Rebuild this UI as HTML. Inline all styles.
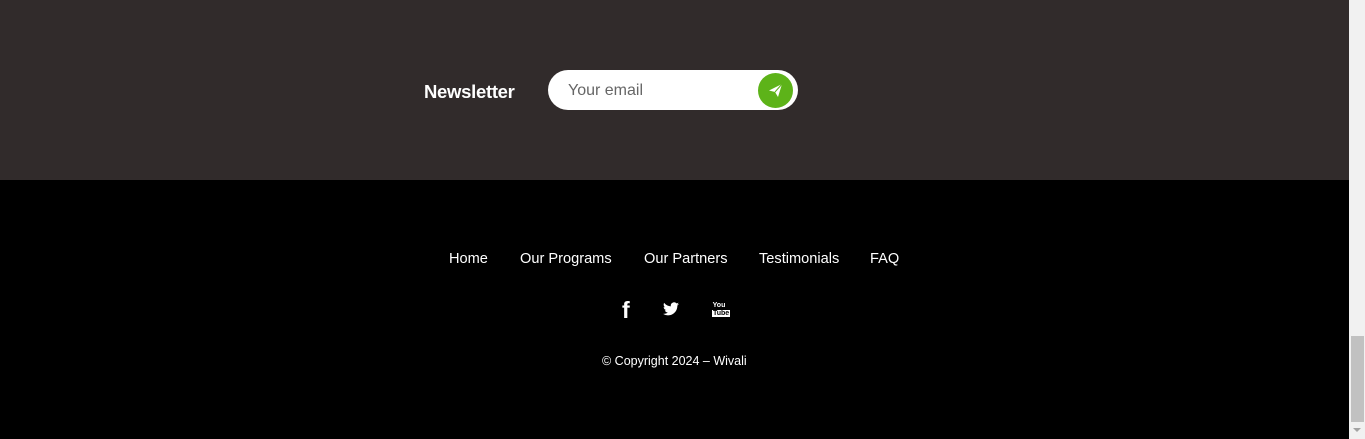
<!DOCTYPE html>
<html><head><style>
body{margin:0;width:1365px;height:439px;overflow:hidden;font-family:"Liberation Sans",sans-serif;position:relative}
.top{position:absolute;left:0;top:0;width:1349px;height:180px;background:#312b2b}
.bot{position:absolute;left:0;top:180px;width:1349px;height:259px;background:#000}
.sb{position:absolute;left:1349px;top:0;width:16px;height:439px;background:#f1f1f1}
.th{position:absolute;left:1351px;top:336px;width:13px;height:86px;background:#c1c1c1}
.nl{position:absolute;left:424px;top:81px;color:#fff;font-size:18.5px;font-weight:bold;letter-spacing:-0.3px}
.inp{position:absolute;left:548px;top:70px;width:250px;height:40px;border-radius:20px;background:#fff}
.inp span{position:absolute;left:20px;top:12px;font-size:16px;color:#666}
.btn{position:absolute;left:758px;top:73px;width:35px;height:35px;border-radius:50%;background:#5db319}
.nav{position:absolute;top:251px;color:#fff;font-size:14.6px}
.cp{position:absolute;left:602px;top:354px;color:#fff;font-size:12.5px}
</style></head><body>
<div class="top"></div><div class="bot"></div>
<div class="sb"></div><div class="th"></div>
<div style="position:absolute;left:1353px;top:428px;width:0;height:0;border-left:4px solid transparent;border-right:4px solid transparent;border-top:4px solid #a3a3a3"></div>
<div class="nl">Newsletter</div>
<div class="inp"><span>Your email</span></div>
<div class="btn"><svg width="35" height="35" viewBox="0 0 35 35"><path d="M11 17.5 L24 11 L20 24 L17 19 Z" fill="#fff"/><path d="M17 19 L24 11" stroke="#5db319" stroke-width="1"/></svg></div>
<div class="nav" style="left:449px">Home</div>
<div class="nav" style="left:520px">Our Programs</div>
<div class="nav" style="left:644px">Our Partners</div>
<div class="nav" style="left:759px">Testimonials</div>
<div class="nav" style="left:870px">FAQ</div>
<div style="position:absolute;left:622px;top:297px;color:#fff;font-weight:bold;font-size:23px">f</div>
<svg style="position:absolute;left:663px;top:302px" width="16" height="14" viewBox="0 0 24 20"><path fill="#fff" d="M24 2.4a10 10 0 0 1-2.8.8A5 5 0 0 0 23.3.4a10 10 0 0 1-3.1 1.2A4.9 4.9 0 0 0 11.8 6 14 14 0 0 1 1.7.9a4.9 4.9 0 0 0 1.5 6.6A5 5 0 0 1 1 6.9a4.9 4.9 0 0 0 3.9 4.8 5 5 0 0 1-2.2.1 4.9 4.9 0 0 0 4.6 3.4A9.9 9.9 0 0 1 0 17.3 14 14 0 0 0 7.5 19.5c9.1 0 14-7.5 14-14v-.6A10 10 0 0 0 24 2.4z"/></svg>
<div style="position:absolute;left:712px;top:302px;color:#fff;font-size:7px;font-weight:bold;line-height:8px;text-align:center;width:14px">You<br><span style="background:#fff;color:#000;padding:0 1px">Tube</span></div>
<div class="cp">© Copyright 2024 – Wivali</div>
</body></html>
